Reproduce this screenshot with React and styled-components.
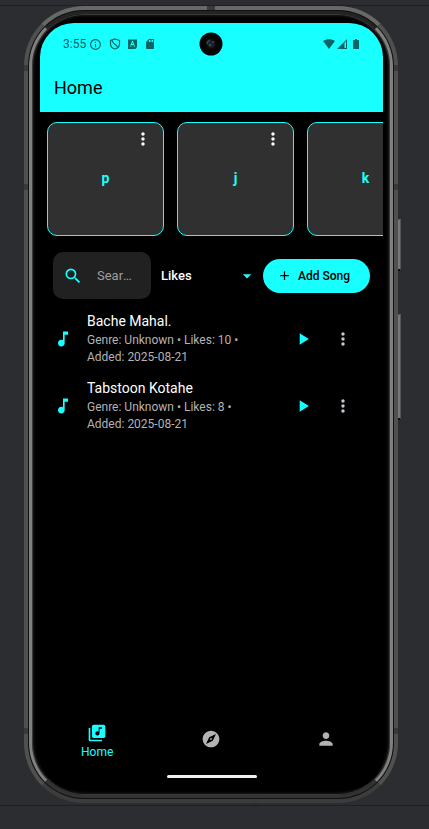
import React, { useState } from "react";
import styled, { createGlobalStyle } from "styled-components";
import {
  MdSearch,
  MdArrowDropDown,
  MdAdd,
  MdMusicNote,
  MdPlayArrow,
  MdMoreVert,
  MdLibraryMusic,
  MdExplore,
  MdPerson,
  MdInfoOutline,
  MdSdCard,
} from "react-icons/md";

const cyan = "#18ffff";

const GlobalStyle = createGlobalStyle`
  *, *::before, *::after { box-sizing: border-box; }
  body { margin: 0; background: #2b2d30; font-family: Roboto, "Liberation Sans", sans-serif; }
  button, input, select { font-family: inherit; margin: 0; }
  svg { display: block; flex: none; }
`;

const Stage = styled.div`
  min-height: 100vh;
  display: flex;
  flex-direction: column;
`;

const TopStrip = styled.div`
  height: 6px;
  border-bottom: 1px solid #1e1f22;
`;

const BottomStrip = styled.div`
  height: 24px;
  margin-top: 2px;
  border-top: 1px solid #1e1f22;
`;

const Phone = styled.div`
  position: relative;
  flex: 1;
  display: flex;
  margin: 0 31px 0 24px;
  padding: 1px;
  border: 4px solid;
  border-color: #686867 #505050 #3c3c3c #505050;
  border-radius: 60px;
  background: #050505;
  box-shadow: inset 0 0 0 1px #111;
`;

const Bezel = styled.div`
  flex: 1;
  min-width: 0;
  display: flex;
  padding: 9px 7px 6px 8px;
  border: 3px solid;
  border-color: #242424 #808080 #333 #808080;
  border-radius: 55px;
  background: #000;
  box-shadow:
    inset 0 0 0 1px #383838,
    inset 0 0 3px 2px #1c1c1c;
`;

const SideKey = styled.span`
  position: absolute;
  left: calc(100% + 4px);
  top: ${(p) => p.$top}px;
  width: 3px;
  height: ${(p) => p.$length}px;
  border: 1px solid #55565a;
  border-bottom: 2px solid #111;
  border-left: 0;
  background: #777;
`;

const Band = styled.span`
  position: absolute;
  background: #3a3a3a;
  ${(p) => (p.$edge === "left" || p.$edge === "right" ? "width: 4px; height: 6px;" : "width: 8px; height: 4px;")}
  ${(p) => p.$edge}: -4px;
  ${(p) => (p.$edge === "left" || p.$edge === "right" ? "top" : "left")}: ${(p) => p.$at}%;
`;

const Screen = styled.div`
  flex: 1;
  min-width: 0;
  display: flex;
  flex-direction: column;
  overflow: hidden;
  border-radius: 34px;
  background: #000;
  color: #fff;
`;

const Header = styled.header`
  background: ${cyan};
  color: #000;
`;

const StatusBar = styled.div`
  height: 42px;
  padding: 0 24px 0 23px;
  display: grid;
  grid-template-columns: 1fr 24px 1fr;
  align-items: center;
  color: #0b6666;
`;

const StatusGroup = styled.div`
  display: flex;
  align-items: center;
  gap: ${(p) => p.$gap}px;
  justify-content: ${(p) => (p.$end ? "flex-end" : "flex-start")};
`;

const Clock = styled.span`
  font-size: 12px;
  line-height: 16px;
  margin-right: -4px;
`;

const Title = styled.h1`
  margin: 0;
  padding: 10px 14px 12px;
  font-size: 18px;
  line-height: 25px;
  font-weight: 400;
`;

const Playlists = styled.section`
  display: flex;
  gap: 13px;
  padding: 10px 7px 0;
  overflow: hidden;
`;

const PlaylistCard = styled.article`
  flex: 0 0 117px;
  height: 114px;
  display: grid;
  grid-template-rows: 32px 1fr 34px;
  border: 1px solid ${cyan};
  border-radius: 10px;
  background: #303030;
`;

const PlaylistName = styled.h2`
  margin: 0;
  align-self: center;
  text-align: center;
  color: ${cyan};
  font-size: 14px;
  line-height: 20px;
  font-weight: 700;
`;

const IconButton = styled.button`
  display: flex;
  align-items: center;
  justify-content: center;
  width: 40px;
  padding: 0;
  border: 0;
  background: none;
  color: ${(p) => p.$color || "#fff"};
  justify-self: end;
`;

const Toolbar = styled.section`
  display: flex;
  align-items: center;
  gap: 6px;
  padding: 16px 13px 6px;
`;

const SearchBox = styled.label`
  flex: 0 0 98px;
  min-width: 0;
  height: 47px;
  margin-right: 4px;
  padding: 0 14px 0 10px;
  display: flex;
  align-items: center;
  gap: 14px;
  border-radius: 10px;
  background: #212121;
  color: ${cyan};
`;

const SearchInput = styled.input`
  flex: 1;
  width: 0;
  min-width: 0;
  padding: 0;
  border: 0;
  outline: 0;
  background: none;
  color: #fff;
  font-size: 13px;
  line-height: 20px;
  text-overflow: ellipsis;
  &::placeholder { color: #9e9e9e; opacity: 1; text-overflow: ellipsis; }
`;

const SortBox = styled.div`
  flex: 1;
  min-width: 0;
  display: grid;
  align-items: center;
  > * { grid-area: 1 / 1; }
  > svg { justify-self: end; pointer-events: none; color: ${cyan}; }
`;

const SortSelect = styled.select`
  width: 100%;
  height: 40px;
  padding: 0 20px 0 0;
  appearance: none;
  border: 0;
  background: #000;
  color: #fff;
  font-size: 13px;
  font-weight: 500;
`;

const AddButton = styled.button`
  flex: none;
  height: 34px;
  padding: 0 20px 0 14px;
  display: flex;
  align-items: center;
  gap: 6px;
  border: 0;
  border-radius: 17px;
  background: ${cyan};
  color: #000;
  font-size: 12px;
  font-weight: 500;
  white-space: nowrap;
`;

const SongList = styled.ul`
  flex: 1;
  margin: 0;
  padding: 0;
  list-style: none;
`;

const SongRow = styled.li`
  min-height: 67px;
  padding: 0 20px 0 13px;
  display: flex;
  align-items: center;
  color: ${cyan};
`;

const SongText = styled.div`
  flex: 1;
  min-width: 0;
  padding: 0 40px 0 14px;
`;

const SongTitle = styled.h3`
  margin: 0 0 1px;
  color: #fff;
  font-size: 14px;
  line-height: 20px;
  font-weight: 400;
`;

const SongMeta = styled.p`
  margin: 0;
  color: #b3b3b3;
  font-size: 12px;
  line-height: 17px;
`;

const NavBar = styled.nav`
  display: grid;
  grid-template-columns: repeat(3, 1fr);
  height: 66px;
`;

const NavItem = styled.button`
  display: flex;
  flex-direction: column;
  align-items: center;
  justify-content: center;
  gap: 1px;
  padding: ${(p) => (p.$active ? "5px 0 0" : "0")};
  border: 0;
  background: none;
  color: ${(p) => (p.$active ? cyan : "#b3b3b3")};
  font-size: 12px;
  line-height: 17px;
`;

const GestureBar = styled.div`
  width: 90px;
  height: 3px;
  margin: 3px auto 11px;
  border-radius: 2px;
  background: #f0f0f0;
`;

const ShieldIcon = () => (
  <svg width="12" height="12" viewBox="0 0 24 24" fill="none" stroke="currentColor" strokeWidth="2.4">
    <path d="M12 2 21 5v7c0 5-4 8.500-9 10-5-1.500-9-5-9-10V5z" />
    <path d="M6 4c0 8 7 7 11 14" />
  </svg>
);

const KeyboardBadge = () => (
  <svg width="9" height="10" viewBox="0 0 18 20">
    <path fill="currentColor" fillRule="evenodd" d="M0 1h18v15l-3 4H0zM8 4 4 15h2l1-3h4l1 3h2L10 4zM8 10l1-3 1 3z" />
  </svg>
);

const WifiIcon = () => (
  <svg width="12" height="10" viewBox="0 0 24 20" fill="currentColor">
    <path d="M0 4C7-1 17-1 24 4L12 20z" />
  </svg>
);

const SignalIcon = () => (
  <svg width="14" height="10" viewBox="0 0 28 20" fill="currentColor">
    <path fillRule="evenodd" d="M20 0v20H0zM15 8v10h3V4z" />
  </svg>
);

const BatteryIcon = () => (
  <svg width="6" height="10" viewBox="0 0 6 10" fill="currentColor">
    <path d="M2 0h2v1h2v9H0V1h2z" />
  </svg>
);

const CameraIcon = () => (
  <svg width="24" height="24" viewBox="0 0 24 24">
    <circle cx="12" cy="12" r="11.500" fill="#050505" />
    <circle cx="12" cy="12" r="5" fill="#0d1113" />
    <circle cx="12" cy="12" r="3.500" fill="#1b212a" />
    <path d="M8 12a4 4 0 0 1 3-4" fill="none" stroke="#33454c" strokeWidth="1.500" />
    <circle cx="14" cy="10" r="1" fill="#55306a" />
    <circle cx="11" cy="13" r="1" fill="#49606b" />
  </svg>
);

const playlists = ["p", "j", "k"];
const songs = [
  { title: "Bache Mahal.", likes: 10, added: "2025-08-21" },
  { title: "Tabstoon Kotahe", likes: 8, added: "2025-08-21" },
];

export default function App() {
  const [query, setQuery] = useState("");
  const [sort, setSort] = useState("Likes");
  return (
    <>
      <GlobalStyle />
      <Stage>
        <TopStrip />
        <Phone>
          <Band $edge="left" $at={7} />
          <Band $edge="right" $at={7} />
          <Band $edge="left" $at={22} />
          <Band $edge="right" $at={22} />
          <Band $edge="left" $at={91} />
          <Band $edge="right" $at={91} />
          <Band $edge="top" $at={49} />
          <Band $edge="bottom" $at={61} />
          <SideKey $top={209} $length={52} />
          <SideKey $top={304} $length={106} />
          <Bezel>
            <Screen>
              <Header>
                <StatusBar>
                  <StatusGroup $gap={7}>
                    <Clock>3:55</Clock>
                    <MdInfoOutline size={13} />
                    <ShieldIcon />
                    <KeyboardBadge />
                    <MdSdCard size={12} />
                  </StatusGroup>
                  <CameraIcon />
                  <StatusGroup $gap={2} $end>
                    <WifiIcon />
                    <SignalIcon />
                    <BatteryIcon />
                  </StatusGroup>
                </StatusBar>
                <Title>Home</Title>
              </Header>
              <Playlists>
                {playlists.map((name) => (
                  <PlaylistCard key={name}>
                    <IconButton aria-label={`Options for playlist ${name}`}>
                      <MdMoreVert size={20} />
                    </IconButton>
                    <PlaylistName>{name}</PlaylistName>
                  </PlaylistCard>
                ))}
              </Playlists>
              <Toolbar>
                <SearchBox>
                  <MdSearch size={20} />
                  <SearchInput
                    aria-label="Search songs"
                    placeholder="Search songs"
                    value={query}
                    onChange={(e) => setQuery(e.target.value)}
                  />
                </SearchBox>
                <SortBox>
                  <SortSelect aria-label="Sort by" value={sort} onChange={(e) => setSort(e.target.value)}>
                    <option>Likes</option>
                  </SortSelect>
                  <MdArrowDropDown size={20} />
                </SortBox>
                <AddButton>
                  <MdAdd size={15} />
                  Add Song
                </AddButton>
              </Toolbar>
              <SongList>
                {songs.map((song) => (
                  <SongRow key={song.title}>
                    <MdMusicNote size={20} />
                    <SongText>
                      <SongTitle>{song.title}</SongTitle>
                      <SongMeta>{`Genre: Unknown • Likes: ${song.likes} • Added: ${song.added}`}</SongMeta>
                    </SongText>
                    <IconButton aria-label={`Play ${song.title}`} $color={cyan}>
                      <MdPlayArrow size={20} />
                    </IconButton>
                    <IconButton aria-label={`Options for ${song.title}`} $color="#cac4d0">
                      <MdMoreVert size={20} />
                    </IconButton>
                  </SongRow>
                ))}
              </SongList>
              <NavBar>
                <NavItem $active>
                  <MdLibraryMusic size={20} />
                  Home
                </NavItem>
                <NavItem aria-label="Explore">
                  <MdExplore size={20} />
                </NavItem>
                <NavItem aria-label="Profile">
                  <MdPerson size={20} />
                </NavItem>
              </NavBar>
              <GestureBar />
            </Screen>
          </Bezel>
        </Phone>
        <BottomStrip />
      </Stage>
    </>
  );
}
